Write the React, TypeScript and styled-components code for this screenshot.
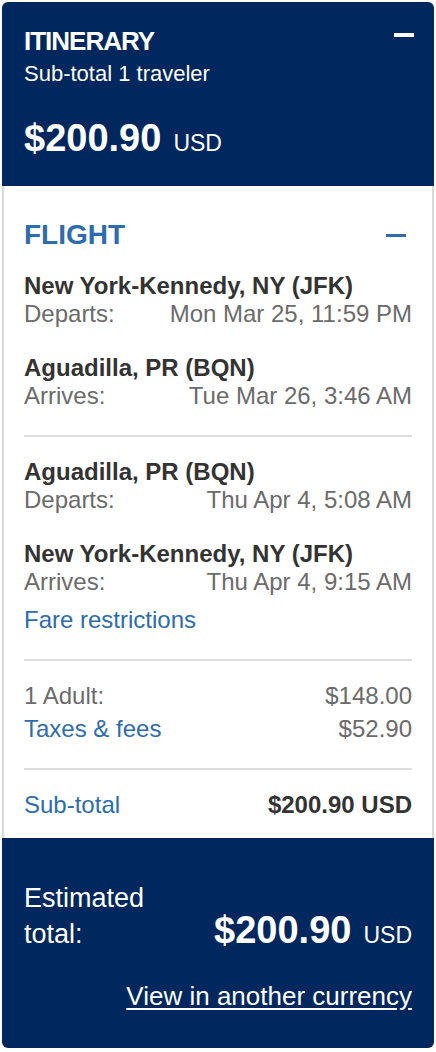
import styled, { createGlobalStyle } from "styled-components";

const GlobalStyle = createGlobalStyle`
  body {
    margin: 0;
    background: #ffffff;
    font-family: "Liberation Sans", Arial, Helvetica, sans-serif;
  }
`;

const NAVY = "#00275e";
const BLUE = "#2d6cae";
const DARK = "#333333";
const GREY = "#6b6b6b";

const Card = styled.section`
  margin: 2px;
  width: 432px;
  border-radius: 6px;
  overflow: hidden;
`;

const Header = styled.header`
  background: ${NAVY};
  color: #ffffff;
  padding: 24px 20px 26px 22px;
`;

const TitleRow = styled.div`
  display: flex;
  justify-content: space-between;
  align-items: flex-start;
`;

const Title = styled.h1`
  margin: 0;
  font-size: 26px;
  line-height: 30px;
  font-weight: 700;
  letter-spacing: -1px;
`;

const Collapse = styled.button<{ $color: string }>`
  margin: ${(p) => (p.$color === "#ffffff" ? "7px 0 0" : "15px 6px 0 0")};
  padding: 0;
  width: 20px;
  height: ${(p) => (p.$color === "#ffffff" ? "4px" : "3px")};
  border: none;
  background: ${(p) => p.$color};
  cursor: pointer;
`;

const Subtitle = styled.div`
  margin-top: 6px;
  font-size: 22px;
  line-height: 24px;
`;

const Price = styled.div<{ $top?: number }>`
  display: flex;
  align-items: baseline;
  gap: 12px;
  margin-top: ${(p) => p.$top ?? 0}px;
  line-height: 44px;
`;

const Amount = styled.span`
  font-size: 38px;
  font-weight: 700;
`;

const Currency = styled.span`
  font-size: 23px;
  line-height: 23px;
`;

const Body = styled.div`
  border-left: 2px solid #d9d9d9;
  border-right: 2px solid #d9d9d9;
  padding: 33px 20px 19px;
  color: ${DARK};
`;

const SectionHead = styled.div`
  display: flex;
  justify-content: space-between;
  align-items: flex-start;
  margin-bottom: 21px;
`;

const SectionTitle = styled.h2`
  margin: 0;
  font-size: 28px;
  line-height: 32px;
  font-weight: 700;
  color: ${BLUE};
`;

const Leg = styled.div`
  & + & {
    margin-top: 26px;
  }
`;

const Station = styled.div`
  font-size: 24px;
  line-height: 28px;
  font-weight: 700;
`;

const Row = styled.div<{ $gap?: number }>`
  display: flex;
  justify-content: space-between;
  font-size: 24px;
  line-height: 28px;
  color: ${GREY};
  margin-top: ${(p) => p.$gap ?? 0}px;
`;

const Strong = styled.span`
  font-weight: 700;
  color: ${DARK};
`;

const Link = styled.a<{ $gap?: number }>`
  display: block;
  margin-top: ${(p) => p.$gap ?? 0}px;
  font-size: 24px;
  line-height: 28px;
  color: ${BLUE};
  text-decoration: none;
`;

const InlineLink = styled.a`
  color: ${BLUE};
  text-decoration: none;
`;

const Divider = styled.hr`
  margin: 25px 0 21px;
  border: none;
  height: 2px;
  background: #dddddd;
`;

const Footer = styled.footer`
  background: ${NAVY};
  color: #ffffff;
  padding: 42px 22px 37px;
`;

const TotalRow = styled.div`
  display: flex;
  justify-content: space-between;
  align-items: flex-end;
`;

const TotalLabel = styled.div`
  font-size: 27px;
  line-height: 36px;
`;

const Currencies = styled.a`
  display: block;
  margin-top: 29px;
  text-align: right;
  font-size: 26px;
  line-height: 30px;
  color: #ffffff;
  text-decoration: underline;
  text-underline-offset: 3px;
`;

type LegData = { station: string; label: string; time: string };

const outbound: LegData[] = [
  { station: "New York-Kennedy, NY (JFK)", label: "Departs:", time: "Mon Mar 25, 11:59 PM" },
  { station: "Aguadilla, PR (BQN)", label: "Arrives:", time: "Tue Mar 26, 3:46 AM" },
];

const inbound: LegData[] = [
  { station: "Aguadilla, PR (BQN)", label: "Departs:", time: "Thu Apr 4, 5:08 AM" },
  { station: "New York-Kennedy, NY (JFK)", label: "Arrives:", time: "Thu Apr 4, 9:15 AM" },
];

const Legs = ({ items }: { items: LegData[] }) => (
  <>
    {items.map((leg) => (
      <Leg key={leg.station + leg.label}>
        <Station>{leg.station}</Station>
        <Row>
          <span>{leg.label}</span>
          <span>{leg.time}</span>
        </Row>
      </Leg>
    ))}
  </>
);

const App: React.FC = () => (
  <>
    <GlobalStyle />
    <Card>
      <Header>
        <TitleRow>
          <Title>ITINERARY</Title>
          <Collapse $color="#ffffff" aria-label="Collapse itinerary" />
        </TitleRow>
        <Subtitle>Sub-total 1 traveler</Subtitle>
        <Price $top={30}>
          <Amount>$200.90</Amount>
          <Currency>USD</Currency>
        </Price>
      </Header>

      <Body>
        <SectionHead>
          <SectionTitle>FLIGHT</SectionTitle>
          <Collapse $color={BLUE} aria-label="Collapse flight" />
        </SectionHead>
        <Legs items={outbound} />
        <Divider />
        <Legs items={inbound} />
        <Link href="#" $gap={10}>Fare restrictions</Link>
        <Divider />
        <Row>
          <span>1 Adult:</span>
          <span>$148.00</span>
        </Row>
        <Row $gap={5}>
          <InlineLink href="#">Taxes &amp; fees</InlineLink>
          <span>$52.90</span>
        </Row>
        <Divider />
        <Row>
          <InlineLink href="#">Sub-total</InlineLink>
          <Strong>$200.90 USD</Strong>
        </Row>
      </Body>

      <Footer>
        <TotalRow>
          <TotalLabel>
            Estimated
            <br />
            total:
          </TotalLabel>
          <Price>
            <Amount>$200.90</Amount>
            <Currency>USD</Currency>
          </Price>
        </TotalRow>
        <Currencies href="#">View in another currency</Currencies>
      </Footer>
    </Card>
  </>
);

export default App;
